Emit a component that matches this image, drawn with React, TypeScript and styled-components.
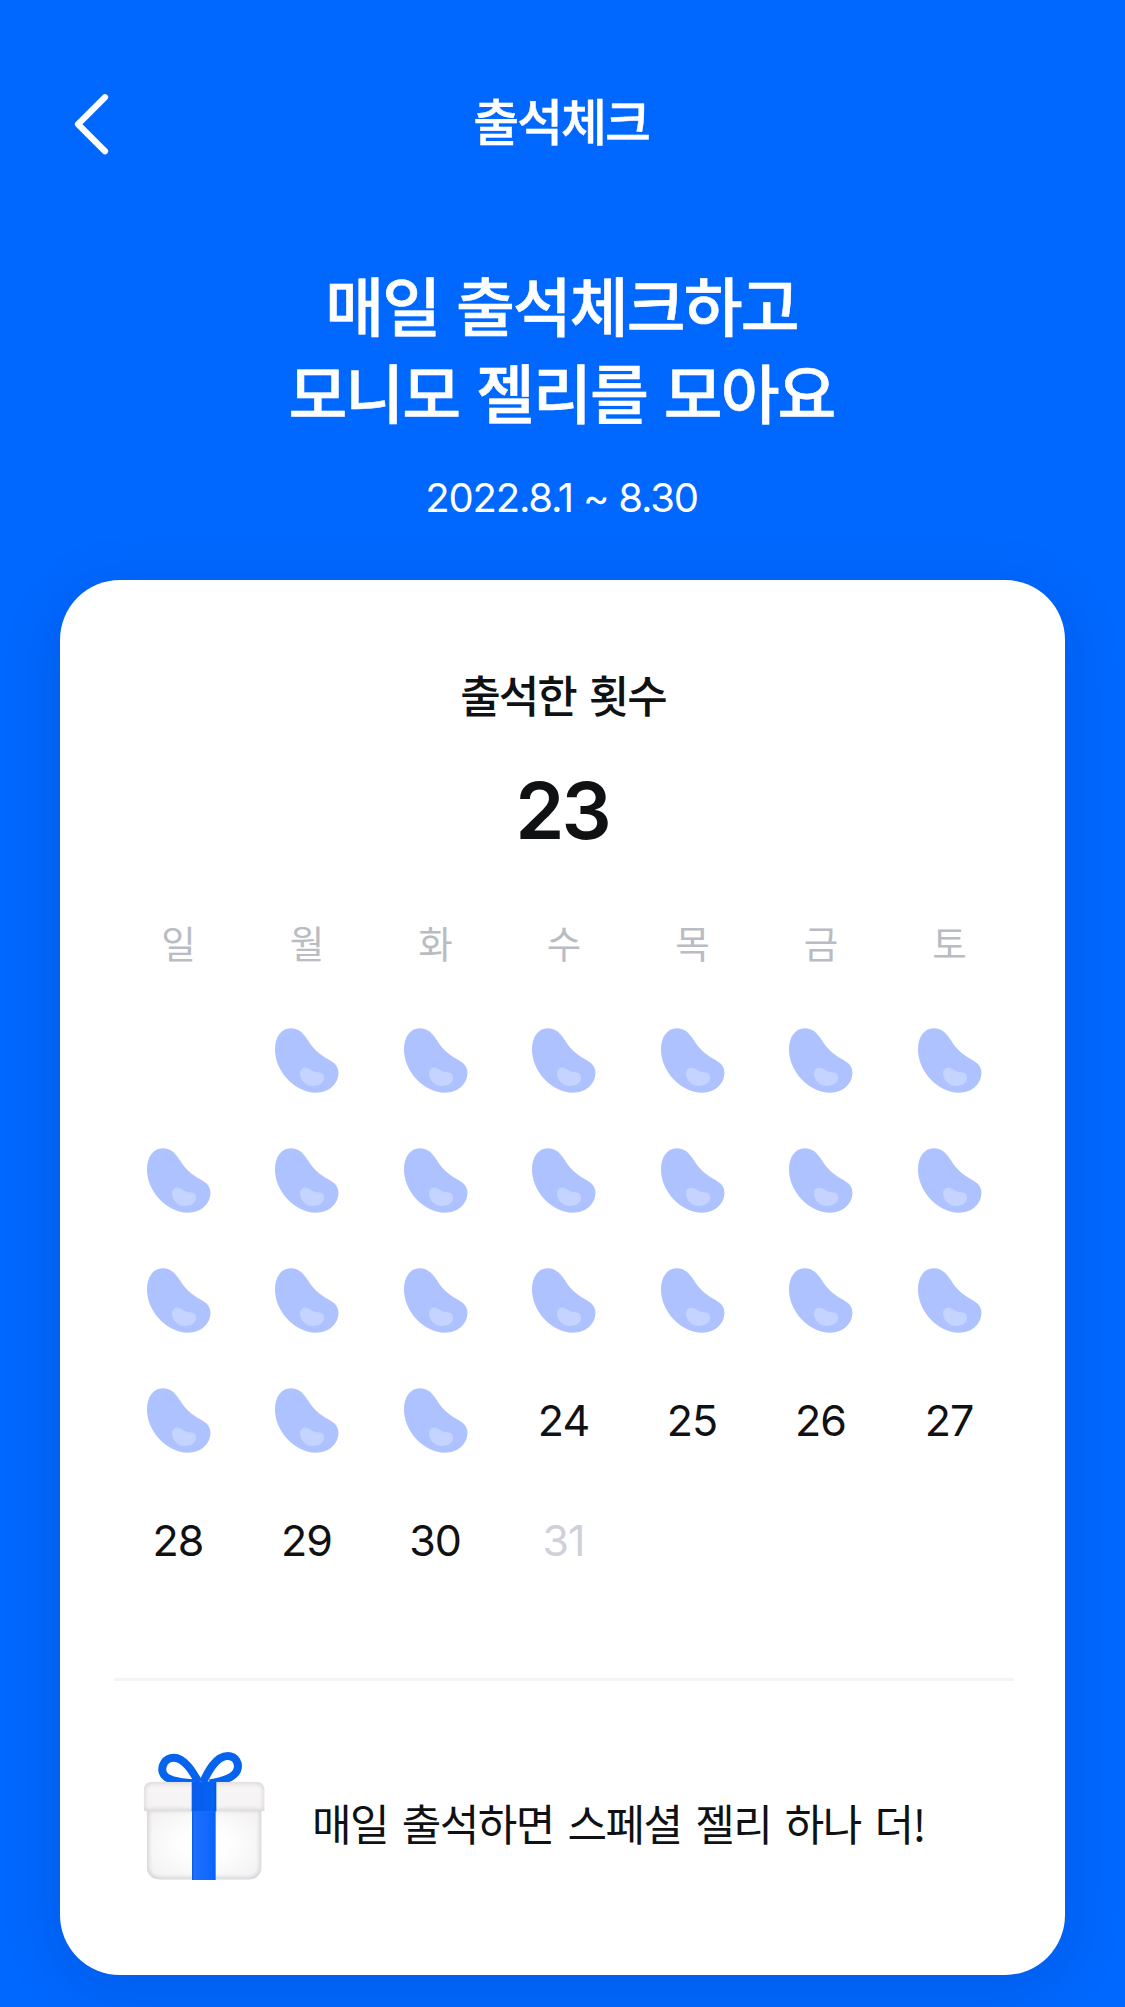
import React from "react";
import styled, { createGlobalStyle } from "styled-components";

const GlobalStyle = createGlobalStyle`
  * { box-sizing: border-box; }
  body {
    margin: 0;
    background: #0068ff;
    font-family: Inter, "Noto Sans CJK KR", sans-serif;
    -webkit-font-smoothing: antialiased;
  }
  h1, h2, p { margin: 0; font-weight: inherit; }
`;

const korean = `font-family: "Noto Sans CJK KR", sans-serif;`;

const Screen = styled.main`
  display: flex;
  flex-direction: column;
  width: 1125px;
  height: 2007px;
  overflow: hidden;
  background: #0068ff;
  color: #ffffff;
`;

const Header = styled.header`
  display: grid;
  grid-template-columns: 120px 1fr 120px;
  align-items: center;
  height: 247px;
  padding: 0 60px;
`;

const BackButton = styled.button`
  display: flex;
  width: 64px;
  height: 72px;
  padding: 3px 0 0 12px;
  border: 0;
  background: none;
  color: inherit;
`;

const Title = styled.h1`
  ${korean}
  font-size: 50px;
  line-height: 60px;
  font-weight: 500;
  letter-spacing: -2.1px;
  text-align: center;
  padding: 0 3px 9px 0;
  -webkit-text-stroke: 0.4px currentColor;
`;

const Hero = styled.section`
  display: flex;
  flex-direction: column;
  align-items: center;
  height: 333px;
  padding-top: 13px;
`;

const Headline = styled.h2`
  ${korean}
  padding-right: 2px;
  font-size: 64px;
  line-height: 87px;
  font-weight: 500;
  letter-spacing: -1.9px;
  word-spacing: 4.2px;
  text-align: center;
  white-space: pre-line;
  -webkit-text-stroke: 0.6px currentColor;
`;

const Period = styled.p`
  margin-top: 40px;
  padding-right: 2px;
  font-size: 40px;
  line-height: 48px;
  letter-spacing: -1.2px;
`;

const Card = styled.section`
  display: flex;
  flex-direction: column;
  flex: none;
  width: 1005px;
  height: 1395px;
  margin-left: 60px;
  padding: 84px 51px 0 54px;
  border-radius: 60px;
  background: #ffffff;
  color: #101113;
  box-shadow: 0 12px 60px rgba(0, 20, 80, 0.15);
`;

const Summary = styled.div`
  display: flex;
  flex-direction: column;
  align-items: center;
`;

const SummaryLabel = styled.p`
  ${korean}
  padding-right: 2px;
  font-size: 44px;
  line-height: 60px;
  font-weight: 500;
  letter-spacing: -2px;
  word-spacing: 5px;
`;

const SummaryCount = styled.p`
  margin-top: 38px;
  padding-right: 4px;
  font-size: 79px;
  line-height: 96px;
  font-weight: 600;
  letter-spacing: -3px;
`;

const Week = styled.div`
  display: grid;
  grid-template-columns: repeat(7, 128.5px);
  justify-content: center;
  margin-top: 54px;
`;

const Weekday = styled.span`
  ${korean}
  display: flex;
  align-items: center;
  justify-content: center;
  height: 60px;
  font-size: 37.5px;
  line-height: 60px;
  color: #b9bcc2;
`;

const Days = styled.div`
  display: grid;
  grid-template-columns: repeat(7, 128.5px);
  grid-auto-rows: 120px;
  justify-content: center;
  margin-top: 28px;
`;

const Day = styled.div<{ $muted?: boolean }>`
  display: flex;
  align-items: center;
  justify-content: center;
  font-size: 43px;
  letter-spacing: -1px;
  color: ${(p) => (p.$muted ? "#cfd1da" : "#101113")};
`;

const DayNumber = styled.span`
  padding: 0 1px 1px 0;
`;

const Divider = styled.hr`
  width: 900px;
  height: 3px;
  margin: 78px 0 0;
  border: 0;
  background: #f4f4f5;
`;

const Reward = styled.div`
  display: flex;
  align-items: center;
  gap: 46px;
  padding: 69px 0 0 29px;
`;

const RewardText = styled.p`
  ${korean}
  padding-top: 11px;
  font-size: 43px;
  line-height: 60px;
  letter-spacing: -1.5px;
  word-spacing: 5.4px;
  white-space: nowrap;
`;

const ChevronLeft = () => (
  <svg width="40" height="66" viewBox="0 0 40 66" fill="none" stroke="currentColor">
    <path d="M33 6.2 L6 33.2 L33 60.2" strokeWidth="6.2" strokeLinecap="round" strokeLinejoin="round" />
  </svg>
);

const Jelly = () => (
  <svg width="64" height="65" viewBox="0 0 64 65">
    <path
      fill="#aec2ff"
      d="M16 0.300C22.500 0.300 27 4 31 9.500C35.500 16 38 20.500 45 26C51 30.500 56 32.500 59.500 35.500C62.500 38.500 63.400 41.500 63.400 45C63.400 55.500 54.500 64.700 41 64.700C20 64.700 0 43.500 0 21.800C0 9 6 0.300 16 0.300Z"
    />
    <path
      fill="#c5d3ff"
      d="M30.500 39.800C34.500 39.800 36 43.800 43 44.300C47 44.500 49 46.500 49 49.800C49 54.800 44 58 38 58C30 58 25 51.500 25 45C25 41.800 28 39.800 30.500 39.800Z"
    />
  </svg>
);

const Gift = () => (
  <svg width="123" height="132" viewBox="40 60 369 396">
    <defs>
      <radialGradient id="boxFill" cx="0.5" cy="0.5" r="0.72">
        <stop offset="0.3" stopColor="#fefefe" />
        <stop offset="1" stopColor="#f1eff0" />
      </radialGradient>
      <linearGradient id="lidFill" x1="0" y1="0" x2="0" y2="1">
        <stop offset="0" stopColor="#f1efef" />
        <stop offset="0.25" stopColor="#f7f5f5" />
        <stop offset="0.85" stopColor="#f5f3f3" />
        <stop offset="1" stopColor="#eae8ea" />
      </linearGradient>
      <linearGradient id="ribbonFill" x1="0" y1="0" x2="1" y2="0">
        <stop offset="0" stopColor="#0c58e4" />
        <stop offset="0.1" stopColor="#1e70fa" />
        <stop offset="0.6" stopColor="#146afe" />
        <stop offset="1" stopColor="#0563fa" />
      </linearGradient>
      <linearGradient id="knotFill" x1="0" y1="0" x2="1" y2="0">
        <stop offset="0" stopColor="#0a5cea" />
        <stop offset="0.85" stopColor="#0562f4" />
        <stop offset="1" stopColor="#0058e0" />
      </linearGradient>
      <filter id="edgeBlur" x="-10%" y="-10%" width="120%" height="120%">
        <feGaussianBlur stdDeviation="6" />
      </filter>
      <clipPath id="boxClip">
        <path d="M51 236H396V406Q396 449 353 449H94Q51 449 51 406Z" />
      </clipPath>
      <clipPath id="lidClip">
        <path d="M42 182Q42 155 69 155H378Q405 155 405 182V244H42Z" />
      </clipPath>
    </defs>
    <g fill="none" stroke="#0563ee" strokeWidth="24">
      <path d="M207 157C190 127 165 83 132 83C106 83 94 108 99 127C104 145 130 156 190 160" />
      <path d="M220 157C234 127 258 78 294 78C320 78 330 103 322 122C313 145 270 155 240 160" />
    </g>
    <g clipPath="url(#boxClip)">
      <rect x="51" y="236" width="345" height="213" fill="url(#boxFill)" />
      <path
        d="M51 236H396V406Q396 449 353 449H94Q51 449 51 406Z"
        fill="none"
        stroke="#cccad2"
        strokeWidth="11"
        filter="url(#edgeBlur)"
      />
    </g>
    <rect x="187" y="238" width="71" height="212" fill="url(#ribbonFill)" />
    <g clipPath="url(#lidClip)">
      <rect x="42" y="155" width="363" height="89" fill="url(#lidFill)" />
      <path
        d="M42 182Q42 155 69 155H378Q405 155 405 182V244H42Z"
        fill="none"
        stroke="#d4d1d6"
        strokeWidth="9"
        filter="url(#edgeBlur)"
      />
    </g>
    <rect x="186" y="154" width="74" height="90" fill="url(#knotFill)" />
  </svg>
);

const WEEKDAYS = ["일", "월", "화", "수", "목", "금", "토"];
const ATTENDED = 23;
const LAST_EVENT_DAY = 30;

// The month starts on a Monday, so the first Sunday cell stays empty.
const CELLS: (number | null)[] = [null, ...Array.from({ length: 31 }, (_, i) => i + 1)];

export default function App() {
  return (
    <>
      <GlobalStyle />
      <Screen>
        <Header>
          <BackButton aria-label="뒤로">
            <ChevronLeft />
          </BackButton>
          <Title>출석체크</Title>
        </Header>
        <Hero>
          <Headline>{"매일 출석체크하고\n모니모 젤리를 모아요"}</Headline>
          <Period>2022.8.1 ~ 8.30</Period>
        </Hero>
        <Card>
          <Summary>
            <SummaryLabel>출석한 횟수</SummaryLabel>
            <SummaryCount>{ATTENDED}</SummaryCount>
          </Summary>
          <Week>
            {WEEKDAYS.map((d) => (
              <Weekday key={d}>{d}</Weekday>
            ))}
          </Week>
          <Days>
            {CELLS.map((d, i) => (
              <Day key={i} $muted={d !== null && d > LAST_EVENT_DAY}>
                {d === null ? null : d <= ATTENDED ? <Jelly /> : <DayNumber>{d}</DayNumber>}
              </Day>
            ))}
          </Days>
          <Divider />
          <Reward>
            <Gift />
            <RewardText>매일 출석하면 스페셜 젤리 하나 더!</RewardText>
          </Reward>
        </Card>
      </Screen>
    </>
  );
}
